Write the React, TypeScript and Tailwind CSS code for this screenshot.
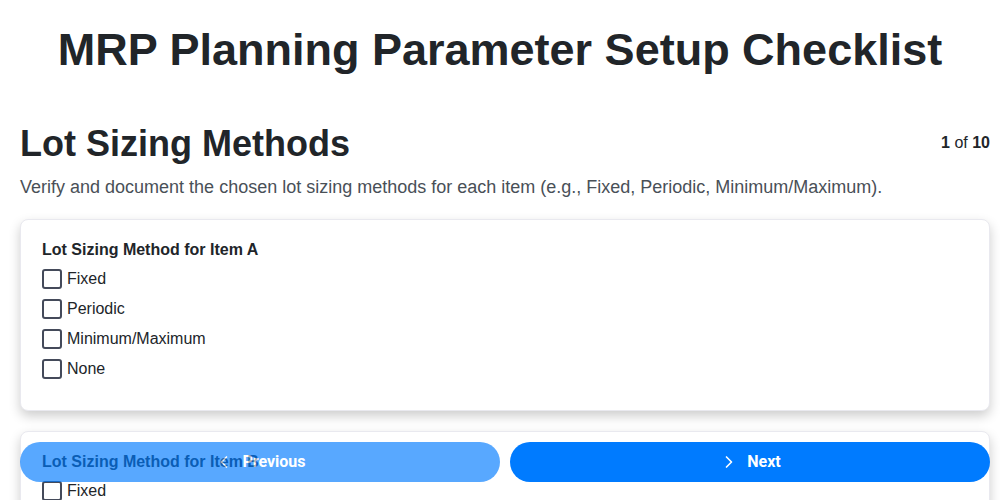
import React from 'react';
import { ChevronLeft, ChevronRight } from 'lucide-react';

const items = [
  { label: 'Lot Sizing Method for Item A', options: ['Fixed', 'Periodic', 'Minimum/Maximum', 'None'] },
  { label: 'Lot Sizing Method for Item B', options: ['Fixed', 'Periodic', 'Minimum/Maximum', 'None'] },
];

export default function App() {
  return (
    <div className="relative h-screen overflow-hidden bg-white text-[#212529] font-['Liberation_Sans',Arial,sans-serif]">
      <h1 className="px-5 pt-[24px] text-center text-[45px] font-bold leading-[52px]">
        MRP Planning Parameter Setup Checklist
      </h1>

      <div className="pl-5 pr-[10px] pb-24">
        <div className="mt-[46px] flex items-start justify-between">
          <h2 className="text-[36px] font-bold leading-[44px]">Lot Sizing Methods</h2>
          <div className="pt-[9px] text-base">
            <span className="font-bold">1</span> of <span className="font-bold">10</span>
          </div>
        </div>
        <p className="mt-[8px] text-[18px] leading-[26px] text-[#495057]">
          Verify and document the chosen lot sizing methods for each item (e.g., Fixed, Periodic, Minimum/Maximum).
        </p>

        <div className="mt-[19px] flex flex-col gap-[20px]">
          {items.map((item) => (
            <div
              key={item.label}
              className="rounded-lg border border-[#e9e9ef] bg-white px-[21px] pt-[19px] pb-[31px] shadow-[0_5px_12px_rgba(0,0,0,0.2)]"
            >
              <div className="text-base font-bold leading-[22px]">{item.label}</div>
              <div className="mt-[8px] flex flex-col gap-[10px]">
                {item.options.map((opt) => (
                  <label key={opt} className="flex items-center gap-[5px] text-base leading-[20px]">
                    <span className="h-[20px] w-[20px] rounded-[3px] border-2 border-[#444a5a] bg-white" />
                    {opt}
                  </label>
                ))}
              </div>
            </div>
          ))}
        </div>
      </div>

      <div className="absolute inset-x-0 bottom-[18px] flex gap-[10px] pl-5 pr-[10px] font-['Roboto',sans-serif]">
        <button className="flex h-10 flex-1 items-center justify-center gap-[8px] rounded-full bg-[#007bff] text-base font-bold text-white opacity-65">
          <ChevronLeft className="h-5 w-5" strokeWidth={2} />
          Previous
        </button>
        <button className="flex h-10 flex-1 items-center justify-center gap-[8px] rounded-full bg-[#007bff] text-base font-bold text-white">
          <ChevronRight className="h-5 w-5" strokeWidth={2} />
          Next
        </button>
      </div>
    </div>
  );
}
